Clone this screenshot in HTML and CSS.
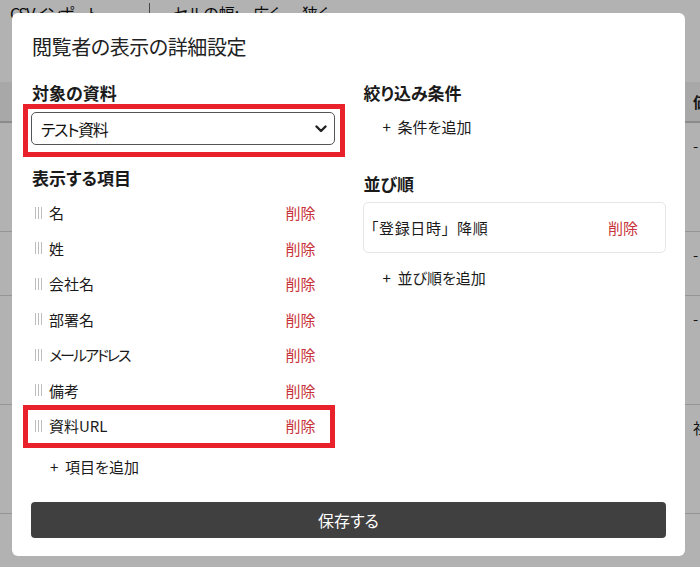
FILE: index.html
```html
<!DOCTYPE html>
<html lang="ja">
<head>
<meta charset="utf-8">
<link rel="stylesheet" href="styles.css">
</head>
<body>
<div class="page">
  <div class="toolbar">
    <span class="tool tool-csv">CSVインポート</span>
    <span class="sep"></span>
    <span class="tool tool-w">セルの幅:</span>
    <span class="tool tool-wide">広く</span>
    <span class="tool tool-narrow">狭く</span>
  </div>
  <div class="table">
    <div class="row head"><div class="c-main"></div><div class="c-last">価格</div></div>
    <div class="row tall"><div class="c-main"></div><div class="c-last">-</div></div>
    <div class="row short"><div class="c-main"></div><div class="c-last">-</div></div>
    <div class="row tall"><div class="c-main"></div><div class="c-last">-</div></div>
    <div class="row tall"><div class="c-main"></div><div class="c-last">社</div></div>
    <div class="row last"><div class="c-main"></div><div class="c-last"></div></div>
  </div>
</div>
<div class="backdrop"></div>

<div class="modal">
  <h1 class="title">閲覧者の表示の詳細設定</h1>
  <div class="cols">
    <div class="col">
      <h2 class="heading">対象の資料</h2>
      <div class="select">
        <span class="kana">テスト資料</span>
        <svg class="chev" width="12" height="8" viewBox="0 0 12 8"><path d="M1.5 1.5 L6 6 L10.5 1.5" fill="none" stroke="#222" stroke-width="2.4" stroke-linecap="round" stroke-linejoin="round"/></svg>
      </div>
      <h2 class="heading h-items">表示する項目</h2>
      <ul class="items">
        <li class="item"><svg class="handle" width="7" height="12" viewBox="0 0 7 12"><rect x="0" y="0" width="1" height="12"/><rect x="3" y="0" width="1" height="12"/><rect x="6" y="0" width="1" height="12"/></svg><span class="label">名</span><span class="del">削除</span></li>
        <li class="item"><svg class="handle" width="7" height="12" viewBox="0 0 7 12"><rect x="0" y="0" width="1" height="12"/><rect x="3" y="0" width="1" height="12"/><rect x="6" y="0" width="1" height="12"/></svg><span class="label">姓</span><span class="del">削除</span></li>
        <li class="item"><svg class="handle" width="7" height="12" viewBox="0 0 7 12"><rect x="0" y="0" width="1" height="12"/><rect x="3" y="0" width="1" height="12"/><rect x="6" y="0" width="1" height="12"/></svg><span class="label">会社名</span><span class="del">削除</span></li>
        <li class="item"><svg class="handle" width="7" height="12" viewBox="0 0 7 12"><rect x="0" y="0" width="1" height="12"/><rect x="3" y="0" width="1" height="12"/><rect x="6" y="0" width="1" height="12"/></svg><span class="label">部署名</span><span class="del">削除</span></li>
        <li class="item"><svg class="handle" width="7" height="12" viewBox="0 0 7 12"><rect x="0" y="0" width="1" height="12"/><rect x="3" y="0" width="1" height="12"/><rect x="6" y="0" width="1" height="12"/></svg><span class="label kana">メールアドレス</span><span class="del">削除</span></li>
        <li class="item"><svg class="handle" width="7" height="12" viewBox="0 0 7 12"><rect x="0" y="0" width="1" height="12"/><rect x="3" y="0" width="1" height="12"/><rect x="6" y="0" width="1" height="12"/></svg><span class="label">備考</span><span class="del">削除</span></li>
        <li class="item"><svg class="handle" width="7" height="12" viewBox="0 0 7 12"><rect x="0" y="0" width="1" height="12"/><rect x="3" y="0" width="1" height="12"/><rect x="6" y="0" width="1" height="12"/></svg><span class="label">資料URL</span><span class="del">削除</span></li>
      </ul>
      <div class="add add-items">+&nbsp; 項目を追加</div>
    </div>
    <div class="col">
      <h2 class="heading">絞り込み条件</h2>
      <div class="add add-filter">+&nbsp; 条件を追加</div>
      <h2 class="heading h-sort">並び順</h2>
      <div class="sort-card">
        <span class="sort-text">「登録日時」降順</span>
        <span class="del">削除</span>
      </div>
      <div class="add add-sort">+&nbsp; 並び順を追加</div>
    </div>
  </div>
  <button class="save">保存する</button>
  <div class="mark mark-select"></div>
  <div class="mark mark-row"></div>
</div>
</body>
</html>
```
FILE: styles.css
```css
* { box-sizing: border-box; }
html, body {
  margin: 0;
  padding: 0;
  width: 700px;
  height: 567px;
  overflow: hidden;
  font-family: "Noto Sans CJK JP", "Noto Sans", sans-serif;
  color: #1e1e1e;
  background: #fff;
}

/* background page */
.page { width: 700px; height: 567px; overflow: hidden; }
.toolbar {
  display: flex;
  align-items: flex-start;
  height: 30px;
  padding: 0 0 0 10px;
  font-size: 16px;
  line-height: 26px;
  font-feature-settings: "palt";
  color: #111;
}
.tool { white-space: nowrap; }
.tool-csv { width: 139px; letter-spacing: -1.5px; }
.toolbar .sep {
  width: 1px;
  height: 30px;
  margin-top: 3px;
  background: #666;
}
.tool-w { margin-left: 23px; width: 80px; }
.tool-wide { width: 49px; }
.table { margin-top: 52px; }
.row { display: flex; border-bottom: 1px solid #d6d6d6; }
.row.head {
  height: 41px;
  background: #f1f1f1;
  border-bottom: 2px solid #c8c8c8;
  font-weight: 700;
  align-items: center;
}
.row.tall { height: 109px; }
.row.short { height: 64px; }
.row.last { height: 50px; border-bottom: none; }
.c-main { width: 687px; flex: none; }
.c-last { padding: 12px 0 0 6px; font-size: 15px; white-space: nowrap; }
.row.head .c-last { padding-top: 0; }

.backdrop {
  position: fixed;
  inset: 0;
  background: rgba(0, 0, 0, 0.3);
}

/* modal */
.modal {
  position: absolute;
  left: 12px;
  top: 13px;
  width: 673px;
  height: 543px;
  background: #fff;
  border-radius: 6px;
  padding: 20px 19px 18px;
  display: flex;
  flex-direction: column;
  font-feature-settings: "palt";
}
.title {
  margin: 0 0 0 1px;
  font-size: 20px;
  line-height: 28px;
  font-weight: 400;
  color: #222;
  letter-spacing: -0.4px;
}
.cols {
  display: grid;
  grid-template-columns: 1fr 1fr;
  column-gap: 28px;
  margin-top: 20px;
}
.col { display: flex; flex-direction: column; }
.heading {
  margin: 0 0 0 1px;
  font-size: 17px;
  line-height: 24px;
  font-weight: 700;
  color: #1a1a1a;
}
.select {
  margin-top: 7px;
  height: 33px;
  border: 1px solid #555;
  border-radius: 5px;
  display: flex;
  align-items: center;
  justify-content: space-between;
  padding: 0 7px 0 9px;
  font-size: 16px;
  color: #111;
}
.kana { letter-spacing: -1.4px; }
.chev { display: block; }
.h-items { margin-top: 21px; }
.items { list-style: none; margin: 5px 0 0; padding: 0; }
.item {
  height: 35.5px;
  display: flex;
  align-items: center;
  padding: 0 19px 0 4px;
  font-size: 15px;
}
.handle { fill: #bdbdbd; flex: none; margin-right: 7px; }
.label { flex: 1; color: #1a1a1a; }
.label.kana { letter-spacing: -2px; }
.del { color: #c8323a; font-size: 15px; }
.add {
  font-size: 15px;
  line-height: 22px;
  padding-left: 19px;
  color: #1a1a1a;
}
.add-items { margin-top: 12px; }
.add-filter { margin-top: 11px; padding-left: 20px; }
.h-sort { margin-top: 34px; }
.sort-card {
  margin-top: 6px;
  height: 51px;
  border: 1px solid #e6e6e6;
  border-radius: 5px;
  display: flex;
  align-items: center;
  justify-content: space-between;
  padding: 0 27px 0 0;
  font-size: 15px;
}
.sort-text { font-feature-settings: normal; color: #1a1a1a; letter-spacing: 0.6px; }
.add-sort { margin-top: 14px; padding-left: 20px; }
.save {
  margin-top: 24px;
  height: 36px;
  width: 100%;
  border: none;
  border-radius: 4px;
  background: #404040;
  color: #fff;
  font-family: inherit;
  font-size: 16px;
  font-feature-settings: "palt";
}

/* annotation boxes */
.mark {
  position: absolute;
  border: 5px solid #e8212b;
  pointer-events: none;
}
.mark-select { left: 11px; top: 91px; width: 322px; height: 53px; }
.mark-row { left: 11px; top: 392px; width: 312px; height: 43px; }
```
